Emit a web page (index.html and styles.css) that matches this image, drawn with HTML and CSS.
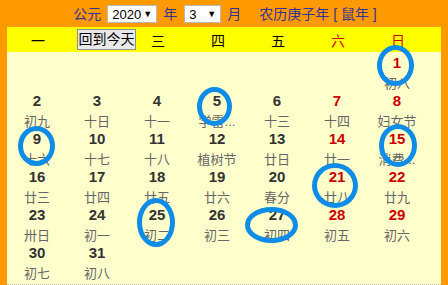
FILE: index.html
```html
<!DOCTYPE html>
<html lang="zh">
<head>
<meta charset="utf-8">
<title>万年历</title>
<link rel="stylesheet" href="styles.css">
</head>
<body>
<div class="page">
  <div class="topbar">
    <span class="lbl">公元</span>
    <span class="sel sel-year"><span>2020</span><span class="arrow">▼</span></span>
    <span class="lbl">年</span>
    <span class="sel sel-month"><span>3</span><span class="arrow">▼</span></span>
    <span class="lbl">月</span>
    <span class="lbl lunar-year">农历庚子年 [ 鼠年 ]</span>
  </div>
  <div class="weekbar">
    <div class="wd">一</div>
    <div class="wd wd-btn"><button class="today">回到今天</button></div>
    <div class="wd">三</div>
    <div class="wd">四</div>
    <div class="wd">五</div>
    <div class="wd red">六</div>
    <div class="wd red">日</div>
  </div>
  <div class="body">
    <div class="grid">
      <div class="cell"></div><div class="cell"></div><div class="cell"></div><div class="cell"></div><div class="cell"></div><div class="cell"></div>
      <div class="cell we"><b>1</b><span>初八</span></div>

      <div class="cell"><b>2</b><span>初九</span></div>
      <div class="cell"><b>3</b><span>十日</span></div>
      <div class="cell"><b>4</b><span>十一</span></div>
      <div class="cell"><b>5</b><span>学雷...</span></div>
      <div class="cell"><b>6</b><span>十三</span></div>
      <div class="cell we"><b>7</b><span>十四</span></div>
      <div class="cell we"><b>8</b><span>妇女节</span></div>

      <div class="cell"><b>9</b><span>十六</span></div>
      <div class="cell"><b>10</b><span>十七</span></div>
      <div class="cell"><b>11</b><span>十八</span></div>
      <div class="cell"><b>12</b><span>植树节</span></div>
      <div class="cell"><b>13</b><span>廿日</span></div>
      <div class="cell we"><b>14</b><span>廿一</span></div>
      <div class="cell we"><b>15</b><span>消费...</span></div>

      <div class="cell"><b>16</b><span>廿三</span></div>
      <div class="cell"><b>17</b><span>廿四</span></div>
      <div class="cell"><b>18</b><span>廿五</span></div>
      <div class="cell"><b>19</b><span>廿六</span></div>
      <div class="cell"><b>20</b><span>春分</span></div>
      <div class="cell we"><b>21</b><span>廿八</span></div>
      <div class="cell we"><b>22</b><span>廿九</span></div>

      <div class="cell"><b>23</b><span>卅日</span></div>
      <div class="cell"><b>24</b><span>初一</span></div>
      <div class="cell"><b>25</b><span>初二</span></div>
      <div class="cell"><b>26</b><span>初三</span></div>
      <div class="cell"><b>27</b><span>初四</span></div>
      <div class="cell we"><b>28</b><span>初五</span></div>
      <div class="cell we"><b>29</b><span>初六</span></div>

      <div class="cell"><b>30</b><span>初七</span></div>
      <div class="cell"><b>31</b><span>初八</span></div>
    </div>
  </div>
  <div class="ring" style="left:377px;top:45px;width:37px;height:41px"></div>
  <div class="ring" style="left:197px;top:87px;width:35px;height:39px"></div>
  <div class="ring" style="left:18px;top:126px;width:37px;height:40px"></div>
  <div class="ring" style="left:379px;top:124px;width:38px;height:43px"></div>
  <div class="ring" style="left:312px;top:163px;width:46px;height:45px"></div>
  <div class="ring" style="left:137px;top:198px;width:38px;height:49px"></div>
  <div class="ring" style="left:245px;top:207px;width:53px;height:36px"></div>
</div>
</body>
</html>
```
FILE: styles.css
```css
html, body {
  margin: 0;
  padding: 0;
}
body {
  font-family: "Liberation Sans", "Noto Sans CJK SC", sans-serif;
  background: #ff9900;
}
.page {
  position: relative;
  width: 448px;
  height: 285px;
  background: #ff9900;
  padding: 0 7px;
  box-sizing: border-box;
  overflow: hidden;
}
.topbar {
  height: 27px;
  display: flex;
  align-items: center;
  justify-content: center;
  gap: 6px;
  font-size: 14px;
  color: #333399;
  padding-left: 2px;
  padding-top: 1px;
  box-sizing: border-box;
}
.lbl {
  line-height: 18px;
}
.lunar-year {
  margin-left: 12px;
}
.sel {
  display: inline-flex;
  align-items: center;
  justify-content: space-between;
  height: 18px;
  box-sizing: border-box;
  background: #fff;
  border: 1px solid #b9b9b9;
  color: #000;
  font-size: 13px;
  padding: 0 4px 0 4px;
}
.sel-year { width: 50px; }
.sel-month { width: 37px; margin-left: 1px; }
.arrow {
  font-size: 9px;
}
.weekbar {
  height: 25px;
  background: #ffff00;
  display: grid;
  grid-template-columns: repeat(7, 60px);
  align-items: center;
  font-size: 14px;
  color: #000;
}
.wd {
  text-align: center;
  padding-left: 2px;
}
.wd.red { color: #cc0000; }
.wd-btn {
  text-align: left;
  padding-left: 10px;
}
.today {
  font-family: "Liberation Sans", "Noto Sans CJK SC", sans-serif;
  font-size: 14px;
  height: 21px;
  width: 59px;
  padding: 0;
  margin: 0;
  background: #e9e9e9;
  border: 1px solid #8f8f8f;
  color: #000;
  white-space: nowrap;
  line-height: 19px;
}
.body {
  background: #ffffcc;
  height: 233px;
  box-sizing: border-box;
  border-bottom: 1px dotted #bbb;
}
.grid {
  display: grid;
  grid-template-columns: repeat(7, 60px);
  grid-auto-rows: 38px;
}
.cell {
  display: flex;
  flex-direction: column;
  align-items: center;
  padding-top: 1px;
}
.cell b {
  font-size: 15px;
  font-weight: bold;
  line-height: 20px;
  color: #333;
}
.cell span {
  font-size: 13px;
  line-height: 22px;
  color: #666;
  white-space: nowrap;
}
.cell.we b { color: #cc0000; }
.ring {
  position: absolute;
  box-sizing: border-box;
  border: 5px solid #0f8ce8;
  border-radius: 50%;
}
```
